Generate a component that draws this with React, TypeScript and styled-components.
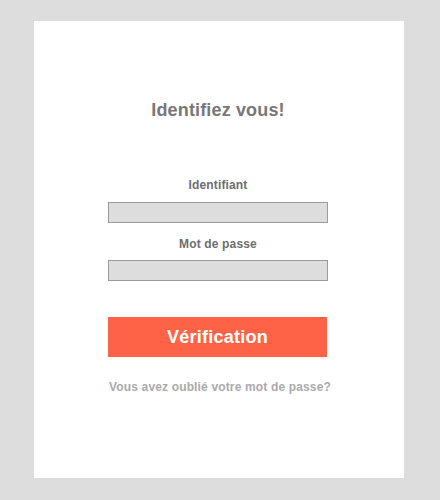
import React from "react";
import styled, { createGlobalStyle } from "styled-components";

const Global = createGlobalStyle`
  html, body { margin: 0; padding: 0; background: #dddddd; }
  body { font-family: "Liberation Sans", Arial, sans-serif; }
  * { box-sizing: border-box; }
`;

const Page = styled.div`
  padding: 21px 0 0 34px;
  min-height: 500px;
`;

const Card = styled.div`
  width: 370px;
  height: 457px;
  background: #ffffff;
  display: flex;
  flex-direction: column;
  align-items: center;
  padding: 79px 2px 0 0;
`;

const Title = styled.h1`
  margin: 0 0 57px;
  font-size: 18px;
  line-height: 21px;
  font-weight: bold;
  letter-spacing: 0.15px;
  color: #777777;
`;

const Form = styled.form`
  display: flex;
  flex-direction: column;
  align-items: center;
  width: 220px;
`;

const Label = styled.label`
  font-size: 12px;
  line-height: 14px;
  font-weight: bold;
  letter-spacing: 0.15px;
  color: #6e6e6e;
  margin-bottom: ${(p: { $gap: number }) => p.$gap}px;
`;

const Input = styled.input`
  width: 220px;
  height: 21px;
  margin: 0 0 ${(p: { $after: number }) => p.$after}px;
  background: #dddddd;
  border: 1px solid #9a9a9a;
  padding: 0;
  outline: none;
`;

const Button = styled.button`
  width: 219px;
  height: 40px;
  align-self: flex-start;
  border: none;
  background: #ff6347;
  color: #ffffff;
  font-family: "Liberation Sans", Arial, sans-serif;
  font-size: 18px;
  font-weight: bold;
  letter-spacing: 0.25px;
  padding: 0;
  cursor: pointer;
`;

const Forgot = styled.a`
  margin: 23px 0 0 4px;
  font-size: 12px;
  line-height: 14px;
  font-weight: bold;
  letter-spacing: 0.15px;
  color: #aaaaaa;
  text-decoration: none;
  white-space: nowrap;
`;

export default function App() {
  return (
    <>
      <Global />
      <Page>
        <Card>
          <Title>Identifiez vous!</Title>
          <Form onSubmit={(e) => e.preventDefault()}>
            <Label $gap={10}>Identifiant</Label>
            <Input $after={14} type="text" />
            <Label $gap={9}>Mot de passe</Label>
            <Input $after={36} type="password" />
            <Button type="submit">Vérification</Button>
            <Forgot href="#">Vous avez oublié votre mot de passe?</Forgot>
          </Form>
        </Card>
      </Page>
    </>
  );
}
